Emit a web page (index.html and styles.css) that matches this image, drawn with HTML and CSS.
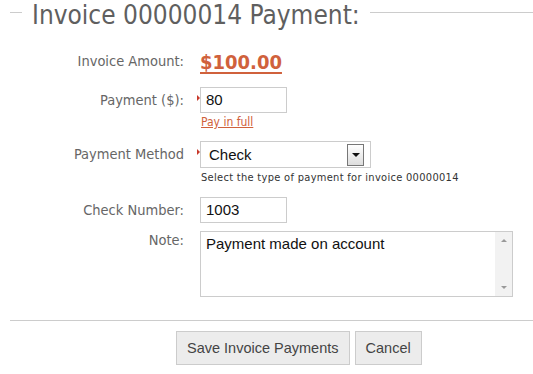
FILE: index.html
```html
<!DOCTYPE html>
<html lang="en">
<head>
  <meta charset="UTF-8">
  <title>Invoice Payment</title>
  <link rel="stylesheet" href="styles.css">
</head>
<body>
  <div class="panel">
    <div class="panel-head">
      <span class="rule rule-short"></span>
      <h1>Invoice 00000014 Payment:</h1>
      <span class="rule"></span>
    </div>

    <div class="form">
      <div class="row row-amount">
        <label class="field-label">Invoice Amount:</label>
        <div class="field">
          <a class="amount" href="#">$100.00</a>
        </div>
      </div>

      <div class="row">
        <label class="field-label">Payment ($):</label>
        <div class="field required">
          <div class="text-input">80</div>
          <a class="link-small" href="#">Pay in full</a>
        </div>
      </div>

      <div class="row row-method">
        <label class="field-label">Payment Method</label>
        <div class="field required">
          <div class="select-box">
            <span>Check</span>
            <span class="select-btn"><span class="caret"></span></span>
          </div>
          <div class="hint">Select the type of payment for invoice 00000014</div>
        </div>
      </div>

      <div class="row row-check">
        <label class="field-label">Check Number:</label>
        <div class="field">
          <div class="text-input">1003</div>
        </div>
      </div>

      <div class="row row-note">
        <label class="field-label">Note:</label>
        <div class="field">
          <div class="textarea">
            <div class="textarea-text">Payment made on account</div>
            <div class="scrollbar">
              <span class="arrow-up"></span>
              <span class="arrow-down"></span>
            </div>
          </div>
        </div>
      </div>
    </div>

    <div class="actions">
      <button class="btn">Save Invoice Payments</button>
      <button class="btn">Cancel</button>
    </div>
  </div>
</body>
</html>
```

FILE: styles.css
```css
* {
  margin: 0;
  padding: 0;
  box-sizing: border-box;
}

body {
  font-family: 'DejaVu Sans Condensed', 'DejaVu Sans', sans-serif;
  background: #fff;
  color: #333;
}

.panel {
  padding-left: 10px;
}

.panel-head {
  display: flex;
  align-items: flex-start;
  height: 30px;
}

.rule {
  flex: 1;
  height: 1px;
  margin-top: 12px;
  background: #ccc;
}

.rule-short {
  flex: 0 0 12px;
}

.panel-head h1 {
  font-size: 26px;
  font-weight: normal;
  color: #5f5f5f;
  padding: 0 10px;
  line-height: 30px;
  white-space: nowrap;
}

.form {
  padding-top: 20px;
}

.row {
  display: flex;
  align-items: flex-start;
}

.field-label {
  width: 174px;
  text-align: right;
  font-size: 14.5px;
  color: #666;
  line-height: 26px;
}

.field {
  position: relative;
  margin-left: 16px;
}

.required::before {
  content: "";
  position: absolute;
  left: -3px;
  top: 8px;
  border-left: 3px solid #c8392b;
  border-top: 3px solid transparent;
  border-bottom: 3px solid transparent;
}

.row-amount {
  height: 37px;
}

.row-amount .field-label {
  line-height: 22px;
}

.amount {
  font-size: 20px;
  font-weight: bold;
  color: #d0613c;
  text-decoration: underline;
  text-decoration-thickness: 2px;
  text-underline-offset: 3px;
  line-height: 24px;
}

.text-input {
  width: 87px;
  height: 26px;
  border: 1px solid #ccc;
  font-family: 'Liberation Sans', Arial, sans-serif;
  font-size: 15px;
  color: #111;
  padding: 0 5px;
  line-height: 24px;
}

.link-small {
  display: block;
  font-size: 12px;
  color: #d0613c;
  margin-top: 2px;
  padding-left: 1px;
}

.row-method {
  margin-top: 12px;
}

.select-box {
  width: 171px;
  height: 27px;
  border: 1px solid #ccc;
  display: flex;
  align-items: center;
  justify-content: space-between;
  padding: 0 6px 0 8px;
  font-family: 'Liberation Sans', Arial, sans-serif;
  font-size: 15px;
  color: #111;
}

.select-btn {
  width: 17px;
  height: 22px;
  border: 1px solid #777;
  background: linear-gradient(#fff, #ddd);
  display: flex;
  align-items: center;
  justify-content: center;
}

.caret {
  border-top: 4px solid #111;
  border-left: 4px solid transparent;
  border-right: 4px solid transparent;
}

.hint {
  font-size: 11px;
  color: #333;
  margin-top: 3px;
  padding-left: 1px;
  letter-spacing: 0.3px;
}

.row-check {
  margin-top: 13px;
}

.row-note {
  margin-top: 8px;
}

.row-note .field-label {
  line-height: 18px;
}

.textarea {
  width: 313px;
  height: 66px;
  border: 1px solid #ccc;
  display: flex;
}

.textarea-text {
  flex: 1;
  font-family: 'Liberation Sans', Arial, sans-serif;
  font-size: 15px;
  color: #111;
  padding: 3px 5px;
}

.scrollbar {
  width: 17px;
  background: #f2f2f2;
  display: flex;
  flex-direction: column;
  justify-content: space-between;
  align-items: center;
  padding: 7px 0;
}

.arrow-up {
  border-bottom: 3px solid #999;
  border-left: 3px solid transparent;
  border-right: 3px solid transparent;
}

.arrow-down {
  border-top: 3px solid #999;
  border-left: 3px solid transparent;
  border-right: 3px solid transparent;
}

.actions {
  margin-top: 23px;
  border-top: 1px solid #ccc;
  display: flex;
  gap: 5px;
  padding-top: 10px;
  padding-left: 166px;
}

.btn {
  height: 34px;
  padding: 0 10px;
  font-family: 'Liberation Sans', Arial, sans-serif;
  font-size: 14.5px;
  color: #444;
  background: #ececec;
  border: 1px solid #ccc;
}
```
